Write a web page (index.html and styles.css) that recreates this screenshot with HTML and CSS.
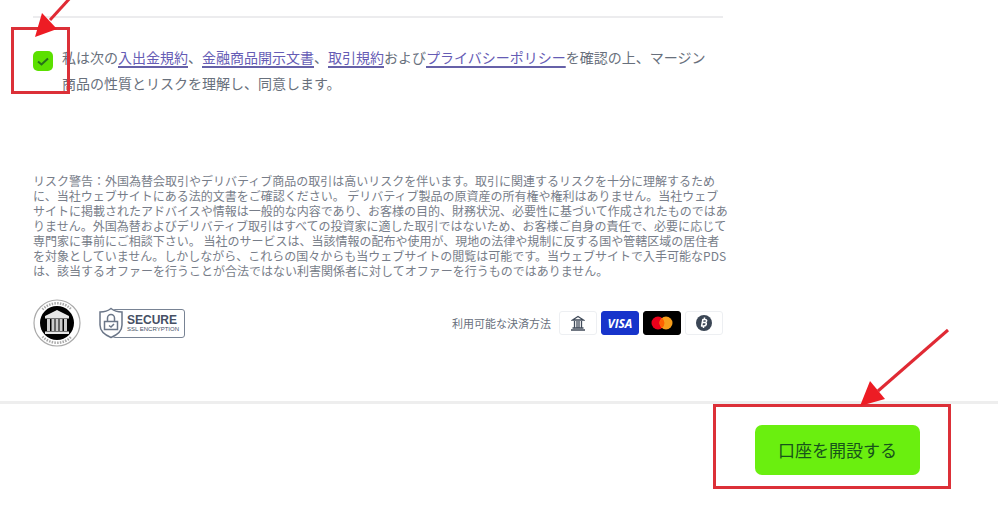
FILE: index.html
```html
<!DOCTYPE html>
<html lang="ja">
<head>
<meta charset="utf-8">
<title>口座を開設する</title>
<link rel="stylesheet" href="styles.css">
</head>
<body>
<form class="page">
  <main class="content">
    <div class="consent">
      <span class="check">
        <input class="check-input" type="checkbox" id="agree" checked>
        <svg class="check-mark" viewBox="0 0 20 20" aria-hidden="true"><path d="M5 10.500l3.500 3L15 7.500"/></svg>
      </span>
      <label class="consent-text" for="agree">私は次の<a href="#">入出金規約</a>、<a href="#">金融商品開示文書</a>、<a href="#">取引規約</a>および<a href="#">プライバシーポリシー</a>を確認の上、マージン<br>商品の性質とリスクを理解し、同意します。</label>
    </div>
    <p class="risk">リスク警告：外国為替会取引やデリバティブ商品の取引は高いリスクを伴います。取引に関連するリスクを十分に理解するため<br>に、当社ウェブサイトにある法的文書をご確認ください。 デリバティブ製品の原資産の所有権や権利はありません。当社ウェブ<br>サイトに掲載されたアドバイスや情報は一般的な内容であり、お客様の目的、財務状況、必要性に基づいて作成されたものではあ<br>りません。外国為替およびデリバティブ取引はすべての投資家に適した取引ではないため、お客様ご自身の責任で、必要に応じて<br>専門家に事前にご相談下さい。 当社のサービスは、当該情報の配布や使用が、現地の法律や規制に反する国や管轄区域の居住者<br>を対象としていません。しかしながら、これらの国々からも当ウェブサイトの閲覧は可能です。当ウェブサイトで入手可能なPDS<br>は、該当するオファーを行うことが合法ではない利害関係者に対してオファーを行うものではありません。</p>
    <div class="trust">
      <svg class="seal" viewBox="0 0 48 48" aria-hidden="true">
        <circle cx="24" cy="24" r="23" fill="#fff" stroke="#aaa" stroke-width="1.200"/>
        <path fill="none" stroke="#aaa" stroke-width="2.500" stroke-dasharray="1.500 1.200" d="M9.500 10.500a20 20 0 0 1 29 0M9.500 37.500a20 20 0 0 0 29 0"/>
        <circle cx="24" cy="24" r="17" fill="#000"/>
        <path fill="#e6e6e6" d="M24 11L36 17v2.500H12V17zM12 32.500h24V35H12z"/>
        <path stroke="#ccc" stroke-width="3" d="M15.500 20v12M20 20v12M24 20v12M28 20v12M32.500 20v12"/>
      </svg>
      <div class="secure">
        <svg class="shield" viewBox="0 0 26 32" aria-hidden="true">
          <path class="shield-body" d="M13 1.500c3 2.500 7 3.500 11 3.500v13c0 6-5 10-11 12.500C7 28 2 24 2 18V5c4 0 8-1 11-3.500z"/>
          <path class="shield-lock" d="M6.500 14.500h13v8h-13zM9.500 14.500v-3.500a3.500 3.500 0 0 1 7 0v3.500M11 18.500l2 1.500 3-3"/>
        </svg>
        <span class="secure-text"><b>SECURE</b><small>SSL ENCRYPTION</small></span>
      </div>
      <div class="payments">
        <span class="payments-label">利用可能な決済方法</span>
        <span class="pay"><svg width="14" height="16" viewBox="0 0 14 16" aria-hidden="true"><path fill="none" stroke="#414b5a" stroke-width="1.300" d="M1.500 5L7 1.500 12.500 5zM3.500 6v7M6 6v7M8 6v7M10.500 6v7M1.500 13h11M0 15h14"/></svg></span>
        <span class="pay visa">VISA</span>
        <span class="pay mastercard"><svg width="22" height="14" viewBox="0 0 22 14" aria-hidden="true"><circle cx="7" cy="7" r="6.500" fill="#eb001b"/><circle cx="15" cy="7" r="6.500" fill="#f79e1b"/><path fill="#ff5f00" d="M11 1.900a6.500 6.500 0 0 1 0 10.200 6.500 6.500 0 0 1 0-10.200z"/></svg></span>
        <span class="pay"><svg width="16" height="16" viewBox="0 0 16 16" aria-hidden="true"><circle cx="8" cy="8" r="8" fill="#3b4655"/><path fill="none" stroke="#fff" stroke-width="1.500" d="M7 4L5.500 11.500M7 4.500h2c2.500 0 2 3-.500 3H6.500M8.500 7.500c3 0 2 3.500-.500 3.500H5M8.500 2.500v2M7.500 11v2"/></svg></span>
      </div>
    </div>
  </main>
  <footer class="actions">
    <button class="submit" type="button">口座を開設する</button>
  </footer>
</form>
<div class="frame frame-check"></div>
<div class="frame frame-submit"></div>
<svg class="arrow arrow-check" viewBox="0 0 40 40" aria-hidden="true"><path class="arrow-line" d="M38-3L17 20"/><path class="arrow-head" d="M2 37L9 13 24 29z"/></svg>
<svg class="arrow arrow-submit" viewBox="0 0 90 80" aria-hidden="true"><path class="arrow-line" d="M88 2L18 63"/><path class="arrow-head" d="M0 78L10 53 25 71z"/></svg>
</body>
</html>
```
FILE: styles.css
```css
* {
  box-sizing: border-box;
}

body {
  position: relative;
  margin: 0;
  background: #fff;
  color: #68707c;
  font-family: "Noto Sans CJK JP", sans-serif;
}

.page {
  padding-top: 16px;
}

.content {
  max-width: 723px;
  padding: 0 0 54px 33px;
}

.consent {
  display: flex;
  gap: 9px;
  padding-top: 26px;
  border-top: 2px solid #ececee;
}

.check {
  display: grid;
  flex: none;
  width: 20px;
  height: 20px;
  margin-top: 7px;
}

.check-input,
.check-mark {
  grid-area: 1 / 1;
  width: 20px;
  height: 20px;
  margin: 0;
}

.check-input {
  appearance: none;
  border-radius: 5px;
  background: #5be000;
}

.check-mark {
  fill: none;
  stroke: #26701a;
  stroke-width: 2;
  pointer-events: none;
}

.consent-text {
  font-size: 14px;
  line-height: 26px;
  white-space: nowrap;
}

.consent-text a {
  color: #665cb5;
  text-decoration: underline 2px #6661a8;
  text-underline-offset: 3px;
}

.risk {
  margin: 77px 0 0;
  color: #777d89;
  font-size: 12px;
  line-height: 15px;
  white-space: nowrap;
}

.trust {
  display: flex;
  align-items: center;
  margin-top: 21px;
}

.seal {
  width: 48px;
  height: 48px;
}

.secure {
  display: flex;
  align-items: center;
  margin-left: 17px;
}

.shield {
  z-index: 1;
  width: 26px;
  height: 32px;
}

.shield path {
  fill: #fff;
  stroke: #6b7688;
  stroke-width: 1.5;
}

.secure-text {
  display: flex;
  flex-direction: column;
  justify-content: center;
  width: 73px;
  height: 29px;
  margin-left: -12px;
  padding-left: 14px;
  border: 1px solid #788394;
  border-radius: 3px;
  color: #465064;
  font-family: "Liberation Sans", sans-serif;
  white-space: nowrap;
}

.secure-text b {
  font-size: 12px;
  line-height: 12px;
}

.secure-text small {
  font-size: 6px;
  line-height: 7px;
}

.payments {
  display: flex;
  align-items: center;
  gap: 4px;
  margin-left: auto;
}

.payments-label {
  margin-right: 4px;
  font-size: 11px;
  line-height: 16px;
}

.pay {
  display: flex;
  align-items: center;
  justify-content: center;
  width: 38px;
  height: 24px;
  border: 1px solid #edeff2;
  border-radius: 3px;
}

.visa {
  border-color: #1734cb;
  background: #1734cb;
  color: #fff;
  font: italic bold 12px "Open Sans", sans-serif;
}

.mastercard {
  border-color: #000;
  background: #000;
}

.actions {
  display: flex;
  justify-content: flex-end;
  padding: 21px 78px 47px 0;
  border-top: 3px solid #eee;
}

.submit {
  width: 165px;
  height: 50px;
  padding: 0 0 2px;
  border: 0;
  border-radius: 7px;
  background: #6aef0f;
  color: #17541b;
  font: 17px "Noto Sans CJK JP", sans-serif;
}

.frame,
.arrow {
  position: absolute;
  pointer-events: none;
}

.frame {
  border: 3px solid #dc3038;
}

.frame-check {
  top: 27px;
  left: 11px;
  width: 59px;
  height: 67px;
}

.frame-submit {
  top: 404px;
  right: 47px;
  width: 238px;
  height: 85px;
}

.arrow-check {
  top: 0;
  left: 33px;
  width: 40px;
  height: 40px;
}

.arrow-submit {
  top: 328px;
  right: 48px;
  width: 90px;
  height: 80px;
}

.arrow-line {
  fill: none;
  stroke: #e02a34;
  stroke-width: 3;
}

.arrow-head {
  fill: #ed1c24;
}
```
